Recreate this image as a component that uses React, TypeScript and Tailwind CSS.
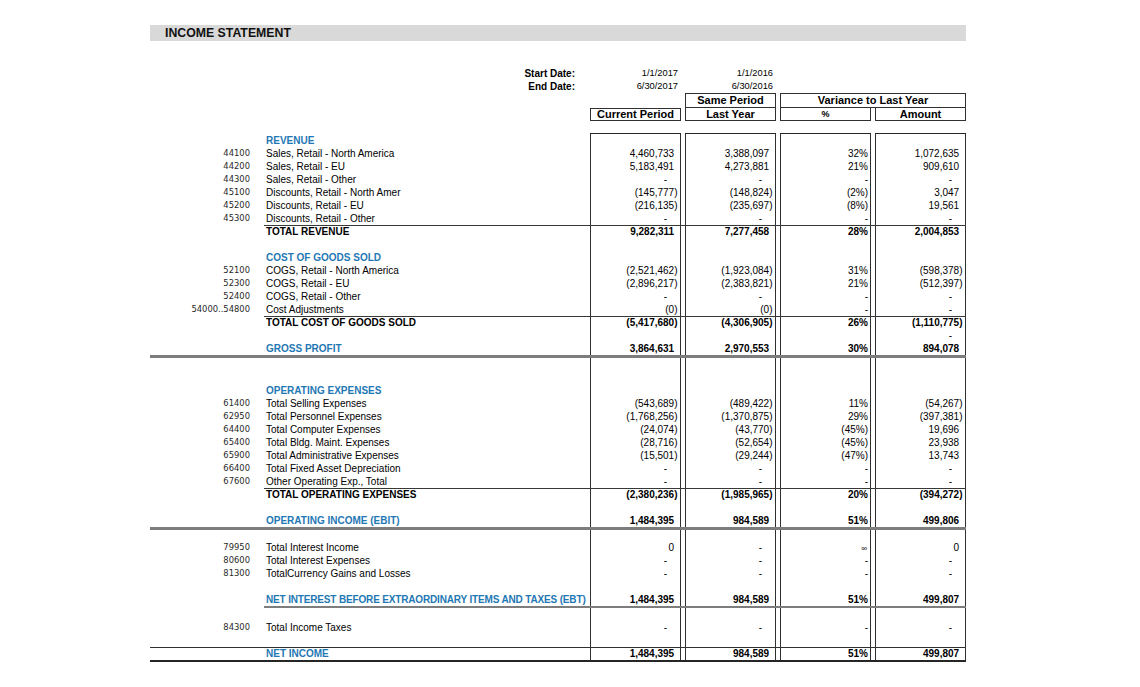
import React from "react";

type Kind = "item" | "head" | "total" | "key";
type V = [string, string, string, string];
type Item =
  | { t: "row"; code?: string; desc?: string; kind?: Kind; v?: V; line?: "desc" | "code"; h?: number; tight?: boolean }
  | { t: "rule"; from: "code" | "desc" | "cells"; h: number; color: "gray" | "dark" };

const H: Record<number, string> = {
  1: "h-[1px]",
  2: "h-[2px]",
  3: "h-[3px]",
  11: "h-[11px]",
  13: "h-[13px]",
};

const D: V = ["-", "-", "-", "-"];

const rows: Item[] = [
  { t: "rule", from: "cells", h: 1, color: "dark" },
  { t: "row", desc: "REVENUE", kind: "head" },
  { t: "row", code: "44100", desc: "Sales, Retail - North America", v: ["4,460,733", "3,388,097", "32%", "1,072,635"] },
  { t: "row", code: "44200", desc: "Sales, Retail - EU", v: ["5,183,491", "4,273,881", "21%", "909,610"] },
  { t: "row", code: "44300", desc: "Sales, Retail - Other", v: D },
  { t: "row", code: "45100", desc: "Discounts, Retail - North Amer", v: ["(145,777)", "(148,824)", "(2%)", "3,047"] },
  { t: "row", code: "45200", desc: "Discounts, Retail - EU", v: ["(216,135)", "(235,697)", "(8%)", "19,561"] },
  { t: "row", code: "45300", desc: "Discounts, Retail - Other", v: D },
  { t: "row", desc: "TOTAL REVENUE", kind: "total", line: "desc", v: ["9,282,311", "7,277,458", "28%", "2,004,853"] },
  { t: "row" },
  { t: "row", desc: "COST OF GOODS SOLD", kind: "head" },
  { t: "row", code: "52100", desc: "COGS, Retail - North America", v: ["(2,521,462)", "(1,923,084)", "31%", "(598,378)"] },
  { t: "row", code: "52300", desc: "COGS, Retail - EU", v: ["(2,896,217)", "(2,383,821)", "21%", "(512,397)"] },
  { t: "row", code: "52400", desc: "COGS, Retail - Other", v: D },
  { t: "row", code: "54000..54800", desc: "Cost Adjustments", v: ["(0)", "(0)", "-", "-"] },
  { t: "row", desc: "TOTAL COST OF GOODS SOLD", kind: "total", line: "desc", v: ["(5,417,680)", "(4,306,905)", "26%", "(1,110,775)"] },
  { t: "row", v: ["", "", "", "-"] },
  { t: "row", desc: "GROSS PROFIT", kind: "key", v: ["3,864,631", "2,970,553", "30%", "894,078"] },
  { t: "rule", from: "code", h: 3, color: "gray" },
  { t: "row" },
  { t: "row" },
  { t: "row", desc: "OPERATING EXPENSES", kind: "head" },
  { t: "row", code: "61400", desc: "Total Selling Expenses", v: ["(543,689)", "(489,422)", "11%", "(54,267)"] },
  { t: "row", code: "62950", desc: "Total Personnel Expenses", v: ["(1,768,256)", "(1,370,875)", "29%", "(397,381)"] },
  { t: "row", code: "64400", desc: "Total Computer Expenses", v: ["(24,074)", "(43,770)", "(45%)", "19,696"] },
  { t: "row", code: "65400", desc: "Total Bldg. Maint. Expenses", v: ["(28,716)", "(52,654)", "(45%)", "23,938"] },
  { t: "row", code: "65900", desc: "Total Administrative Expenses", v: ["(15,501)", "(29,244)", "(47%)", "13,743"] },
  { t: "row", code: "66400", desc: "Total Fixed Asset Depreciation", v: D },
  { t: "row", code: "67600", desc: "Other Operating Exp., Total", v: D },
  { t: "row", desc: "TOTAL OPERATING EXPENSES", kind: "total", line: "desc", v: ["(2,380,236)", "(1,985,965)", "20%", "(394,272)"] },
  { t: "row" },
  { t: "row", desc: "OPERATING INCOME (EBIT)", kind: "key", v: ["1,484,395", "984,589", "51%", "499,806"] },
  { t: "rule", from: "code", h: 3, color: "gray" },
  { t: "row", h: 11 },
  { t: "row", code: "79950", desc: "Total Interest Income", v: ["0", "-", "∞", "0"] },
  { t: "row", code: "80600", desc: "Total Interest Expenses", v: D },
  { t: "row", code: "81300", desc: "TotalCurrency Gains and Losses", v: D },
  { t: "row" },
  { t: "row", desc: "NET INTEREST BEFORE EXTRAORDINARY ITEMS AND TAXES (EBT)", kind: "key", tight: true, v: ["1,484,395", "984,589", "51%", "499,807"] },
  { t: "rule", from: "desc", h: 2, color: "gray" },
  { t: "row" },
  { t: "row", code: "84300", desc: "Total Income Taxes", v: D },
  { t: "row" },
  { t: "row", desc: "NET INCOME", kind: "key", line: "code", v: ["1,484,395", "984,589", "51%", "499,807"] },
  { t: "rule", from: "code", h: 2, color: "dark" },
];

function AccVal({ v, bold }: { v: string; bold: boolean }) {
  if (!v) return null;
  const b = bold ? "font-bold" : "";
  if (v === "-") return <span className="pr-[13px]">-</span>;
  if (v.endsWith(")")) return <span className={`pr-[2.5px] ${b}`}>{v}</span>;
  return (
    <span className={`pr-[2.5px] ${b}`}>
      {v}
      <span className="invisible">)</span>
    </span>
  );
}

function PctVal({ v, bold }: { v: string; bold: boolean }) {
  if (!v) return null;
  if (v === "∞") return <span className="pr-[3px] text-[8px]">∞</span>;
  return <span className={`pr-[2px] ${bold ? "font-bold" : ""}`}>{v}</span>;
}

function Rule({ from, h, color }: { from: "code" | "desc" | "cells"; h: number; color: "gray" | "dark" }) {
  const bg = color === "gray" ? "bg-[#7d7d7d]" : "bg-[#262626]";
  if (from === "code") return <div className={`${H[h]} ${bg}`} />;
  if (from === "desc")
    return (
      <div className={`flex ${H[h]}`}>
        <div className="w-[114px] shrink-0" />
        <div className={`flex-1 ${bg}`} />
      </div>
    );
  return (
    <div className={`flex ${H[h]}`}>
      <div className="w-[440px] shrink-0" />
      <div className="flex gap-[4px]">
        {[0, 1, 2, 3].map((i) => (
          <div key={i} className={`w-[91px] ${bg}`} />
        ))}
      </div>
    </div>
  );
}

function DataRow({
  code,
  desc,
  kind = "item",
  v,
  line,
  h = 13,
  tight,
}: {
  code?: string;
  desc?: string;
  kind?: Kind;
  v?: V;
  line?: "desc" | "code";
  h?: number;
  tight?: boolean;
}) {
  const lead = line ? "leading-[11px]" : "leading-[13px]";
  const bold = kind === "total" || kind === "key";
  const descCls =
    kind === "head" || kind === "key"
      ? "font-bold text-[#1f78b4]"
      : kind === "total"
      ? "font-bold text-black"
      : "text-black";
  return (
    <div className={`flex ${H[h]} ${line === "code" ? "border-t border-[#303030]" : ""}`}>
      <div className="w-[101px] shrink-0 pr-[1px] text-right font-['DejaVu_Sans',sans-serif] text-[8.4px] leading-[13px] text-[#2a2a2a]">
        {code}
      </div>
      <div className="w-[13px] shrink-0" />
      <div className={`flex flex-1 ${line === "desc" ? "border-t border-[#383838]" : ""}`}>
        <div
          className={`w-[326px] shrink-0 overflow-hidden whitespace-nowrap pl-[2px] text-[10px] ${lead} ${descCls} ${
            tight ? "tracking-[-0.16px]" : ""
          }`}
        >
          {desc}
        </div>
        <div className={`flex gap-[4px] text-[10px] ${lead} text-black`}>
          <div className="w-[91px] border-x border-[#303030] text-right">
            <AccVal v={v ? v[0] : ""} bold={bold} />
          </div>
          <div className="w-[91px] border-x border-[#303030] text-right">
            <AccVal v={v ? v[1] : ""} bold={bold} />
          </div>
          <div className="w-[91px] border-x border-[#303030] text-right">
            <PctVal v={v ? v[2] : ""} bold={bold} />
          </div>
          <div className="w-[91px] border-x border-[#303030] text-right">
            <AccVal v={v ? v[3] : ""} bold={bold} />
          </div>
        </div>
      </div>
    </div>
  );
}

export default function App() {
  return (
    <div className="h-[687px] w-[1140px] overflow-hidden bg-white pt-[25px] font-['Liberation_Sans',Arial,sans-serif] text-black">
      <div className="ml-[150px] w-[816px]">
        {/* Title bar */}
        <div className="h-[16px] bg-[#d9d9d9] pl-[15px] text-[12.3px] font-bold leading-[17px] text-[#111]">
          INCOME STATEMENT
        </div>

        {/* Dates */}
        <div className="mt-[26px] flex h-[13px] leading-[13px]">
          <div className="w-[425px] shrink-0 text-right text-[10px] font-bold">Start Date:</div>
          <div className="w-[15px] shrink-0" />
          <div className="w-[91px] shrink-0 pr-[3px] text-right text-[9.3px]">1/1/2017</div>
          <div className="w-[4px] shrink-0" />
          <div className="w-[91px] shrink-0 pr-[3px] text-right text-[9.3px]">1/1/2016</div>
        </div>
        <div className="flex h-[13px] leading-[13px]">
          <div className="w-[425px] shrink-0 text-right text-[10px] font-bold">End Date:</div>
          <div className="w-[15px] shrink-0" />
          <div className="w-[91px] shrink-0 pr-[3px] text-right text-[9.3px]">6/30/2017</div>
          <div className="w-[4px] shrink-0" />
          <div className="w-[91px] shrink-0 pr-[3px] text-right text-[9.3px]">6/30/2016</div>
        </div>

        {/* Column headers */}
        <div className="flex h-[15px] text-[11px] font-bold leading-[13px]">
          <div className="w-[440px] shrink-0" />
          <div className="flex gap-[4px]">
            <div className="w-[91px]" />
            <div className="w-[91px] border border-[#303030] text-center">Same Period</div>
            <div className="w-[186px] border border-[#303030] text-center">Variance to Last Year</div>
          </div>
        </div>
        <div className="flex h-[13px] text-[11px] font-bold">
          <div className="w-[440px] shrink-0" />
          <div className="flex gap-[4px]">
            <div className="w-[91px] border border-[#303030] text-center leading-[11px]">Current Period</div>
            <div className="w-[91px] border-x border-b border-[#303030] text-center leading-[12px]">Last Year</div>
            <div className="w-[91px] border-x border-b border-[#303030] text-center text-[9px] leading-[12px]">%</div>
            <div className="w-[91px] border-x border-b border-[#303030] text-center leading-[12px]">Amount</div>
          </div>
        </div>

        <div className="h-[12px]" />

        {/* Data */}
        {rows.map((r, i) =>
          r.t === "rule" ? (
            <Rule key={i} from={r.from} h={r.h} color={r.color} />
          ) : (
            <DataRow key={i} code={r.code} desc={r.desc} kind={r.kind} v={r.v} line={r.line} h={r.h} tight={r.tight} />
          )
        )}
      </div>
    </div>
  );
}
